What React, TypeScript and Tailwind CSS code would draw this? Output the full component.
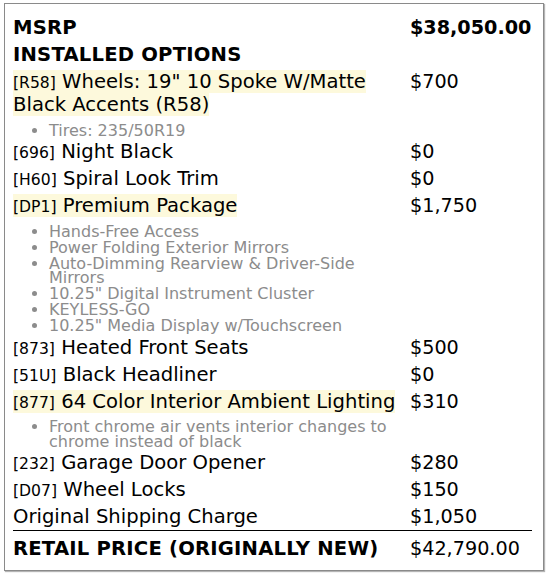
type Item = {
  code?: string;
  name: string;
  price: string;
  hl?: boolean;
  notes?: string[];
};

const items: Item[] = [
  {
    code: 'R58',
    name: 'Wheels: 19" 10 Spoke W/Matte Black Accents (R58)',
    price: '$700',
    hl: true,
    notes: ['Tires: 235/50R19'],
  },
  { code: '696', name: 'Night Black', price: '$0' },
  { code: 'H60', name: 'Spiral Look Trim', price: '$0' },
  {
    code: 'DP1',
    name: 'Premium Package',
    price: '$1,750',
    hl: true,
    notes: [
      'Hands-Free Access',
      'Power Folding Exterior Mirrors',
      'Auto-Dimming Rearview & Driver-Side Mirrors',
      '10.25" Digital Instrument Cluster',
      'KEYLESS-GO',
      '10.25" Media Display w/Touchscreen',
    ],
  },
  { code: '873', name: 'Heated Front Seats', price: '$500' },
  { code: '51U', name: 'Black Headliner', price: '$0' },
  {
    code: '877',
    name: '64 Color Interior Ambient Lighting',
    price: '$310',
    hl: true,
    notes: ['Front chrome air vents interior changes to chrome instead of black'],
  },
  { code: '232', name: 'Garage Door Opener', price: '$280' },
  { code: 'D07', name: 'Wheel Locks', price: '$150' },
  { name: 'Original Shipping Charge', price: '$1,050' },
];

function OptionRow({ item }: { item: Item }) {
  const label = (
    <>
      {item.code && <span className="text-[15.6px] leading-none">[{item.code}]</span>}
      {item.code && ' '}
      {item.name}
    </>
  );

  return (
    <>
      <div className={`pt-[2px] pr-[6px] text-[19.6px] ${item.notes ? 'pb-0' : 'pb-[2px]'}`}>
        {item.hl ? <span className="bg-[#fdf9dc]">{label}</span> : label}
        {item.notes && (
          <ul className="mt-[7.5px] list-disc space-y-[1.5px] pl-[36px] text-[16px] leading-[14.5px] text-[#8c8c8c]">
            {item.notes.map((n) => (
              <li key={n}>{n}</li>
            ))}
          </ul>
        )}
      </div>
      <div className="py-[2px]">{item.price}</div>
    </>
  );
}

export default function App() {
  return (
    <div className="min-h-screen bg-white pt-[3px] pl-[4px] font-['DejaVu_Sans',sans-serif] text-black">
      <div className="w-[540px] border border-[#8a8a8a] shadow-[1px_1px_1px_#b5b5b5] pt-[10px] pb-[8px] pl-[8px] pr-[11px]">
        <div className="grid grid-cols-[397px_122px] text-[19.2px] leading-[23px]">
          <div className="py-[2px] pr-[6px] text-[19.6px] font-bold tracking-[0.2px]">MSRP</div>
          <div className="py-[2px] font-bold">$38,050.00</div>

          <div className="py-[2px] pr-[6px] text-[19.6px] font-bold tracking-[0.2px]">
            INSTALLED OPTIONS
          </div>
          <div className="py-[2px]" />

          {items.map((item) => (
            <OptionRow key={item.name} item={item} />
          ))}

          <div className="border-t border-black pt-[6px] pb-[2px] pr-[6px] text-[19.6px] font-bold tracking-[0.2px]">
            RETAIL PRICE (ORIGINALLY NEW)
          </div>
          <div className="border-t border-black pt-[6px] pb-[2px]">$42,790.00</div>
        </div>
      </div>
    </div>
  );
}
